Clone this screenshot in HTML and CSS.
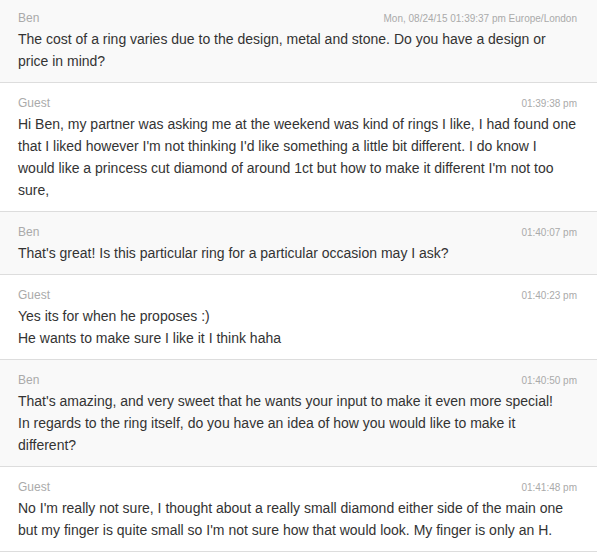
FILE: index.html
```html
<!DOCTYPE html>
<html lang="en">
<head>
<meta charset="utf-8">
<title>Chat transcript</title>
<link rel="stylesheet" href="styles.css">
</head>
<body>
<div class="thread">
  <div class="msg agent">
    <div class="meta"><span class="name">Ben</span><span class="time">Mon, 08/24/15 01:39:37 pm Europe/London</span></div>
    <div class="text">The cost of a ring varies due to the design, metal and stone. Do you have a design or price in mind?</div>
  </div>
  <div class="msg guest">
    <div class="meta"><span class="name">Guest</span><span class="time">01:39:38 pm</span></div>
    <div class="text">Hi Ben, my partner was asking me at the weekend was kind of rings I like, I had found one that I liked however I'm not thinking I'd like something a little bit different. I do know I would like a princess cut diamond of around 1ct but how to make it different I'm not too sure,</div>
  </div>
  <div class="msg agent">
    <div class="meta"><span class="name">Ben</span><span class="time">01:40:07 pm</span></div>
    <div class="text">That's great! Is this particular ring for a particular occasion may I ask?</div>
  </div>
  <div class="msg guest">
    <div class="meta"><span class="name">Guest</span><span class="time">01:40:23 pm</span></div>
    <div class="text">Yes its for when he proposes :)<br>He wants to make sure I like it I think haha</div>
  </div>
  <div class="msg agent">
    <div class="meta"><span class="name">Ben</span><span class="time">01:40:50 pm</span></div>
    <div class="text">That's amazing, and very sweet that he wants your input to make it even more special!<br>In regards to the ring itself, do you have an idea of how you would like to make it different?</div>
  </div>
  <div class="msg guest">
    <div class="meta"><span class="name">Guest</span><span class="time">01:41:48 pm</span></div>
    <div class="text">No I'm really not sure, I thought about a really small diamond either side of the main one but my finger is quite small so I'm not sure how that would look. My finger is only an H.</div>
  </div>
</div>
</body>
</html>
```
FILE: styles.css
```css
html, body {
  margin: 0;
  padding: 0;
  background: #ffffff;
}
body {
  font-family: "Liberation Sans", Arial, Helvetica, sans-serif;
  color: #333333;
  overflow: hidden;
}
.thread {
  margin-top: -2px;
}
.msg {
  padding: 10px 20px 10px 18px;
  border-bottom: 1px solid #dddddd;
}
.msg.agent {
  background: #f9f9f9;
}
.msg.guest {
  background: #ffffff;
}
.meta {
  display: flex;
  justify-content: space-between;
  align-items: baseline;
  height: 20px;
  line-height: 20px;
}
.name {
  font-size: 12px;
  color: #aaaaaa;
}
.time {
  font-size: 10px;
  color: #aaaaaa;
}
.text {
  font-size: 14px;
  line-height: 22px;
}
```
